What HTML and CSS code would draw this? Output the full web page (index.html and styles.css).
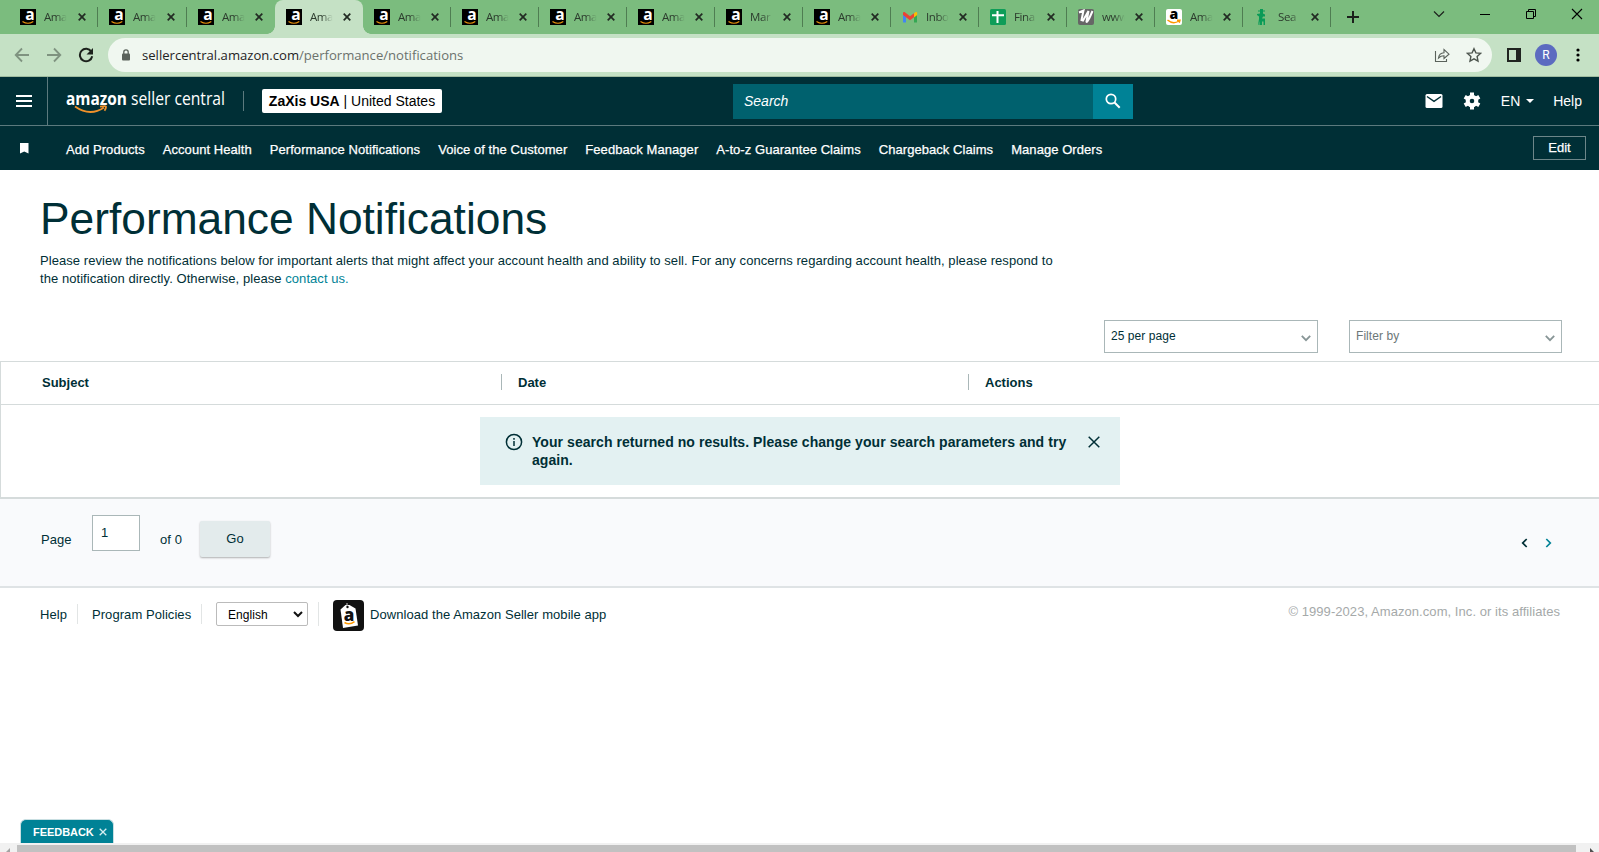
FILE: index.html
```
<!DOCTYPE html>
<html lang="en">
<head>
  <meta charset="utf-8" />
  <title>Performance Notifications</title>
  <link rel="stylesheet" href="styles.css">
</head>
<body>
<svg class="defs" width="0" height="0">
  <symbol id="fav-amazon" viewBox="0 0 16 16">
    <rect width="16" height="16" fill="#000"/>
    <text x="5.300" y="11" font-family="Open Sans, sans-serif" font-weight="700" font-size="16" fill="#fff" textLength="9" lengthAdjust="spacingAndGlyphs">a</text>
    <path d="M2.500 12.500Q8 16 13.300 12.500" fill="none" stroke="#e8920c" stroke-width="1.200"/>
  </symbol>
  <symbol id="fav-amazon-white" viewBox="0 0 16 16">
    <rect width="16" height="16" rx="2" fill="#fff"/>
    <text x="7.600" y="9.500" text-anchor="middle" font-family="Open Sans, sans-serif" font-weight="800" font-size="14" fill="#000">a</text>
    <path d="M1.500 11Q7 15.800 13 12M11 11.200h3l-.8 2.600" fill="none" stroke="#f90" stroke-width="1.400"/>
  </symbol>
  <symbol id="fav-gmail" viewBox="0 0 16 16">
    <path d="M1 4v9.500h3V6z" fill="#4285f4"/>
    <path d="M15 4v9.500h-3V6z" fill="#34a853"/>
    <path d="M12 4.500l1.300-1.200c.9-.6 1.900 0 1.900 1V6L12 8.400z" fill="#fbbc04"/>
    <path d="M1 6V4.300c0-1.200 1-1.700 1.900-1L8 7.200l4-2.900v4L8 11.200 1 6z" fill="#ea4335"/>
  </symbol>
  <symbol id="fav-sheets" viewBox="0 0 16 16">
    <rect width="16" height="16" rx="1.500" fill="#0f9d58"/>
    <path d="M2 6.200h12M7.500 2v12" stroke="#fff" stroke-width="2"/>
  </symbol>
  <symbol id="fav-w" viewBox="0 0 16 16">
    <rect width="16" height="16" rx="2" fill="#666"/>
    <path d="M1 3.500L5.500 1.500 3.500 11 5 11.500 10.500 2 8.500 12.500Q9 15 14.500 2" fill="none" stroke="#fff" stroke-width="2"/>
  </symbol>
  <symbol id="fav-green" viewBox="0 0 16 16">
    <path d="M6 0h3v1.500h2v1H9v2l2 1v2H9l-1 2h3V16H9.500v-3.500H8V16H5.500v-4L4.500 16H4l1-6V7.500L3 6V5l3-.5v-2H4v-1h2z" fill="#0a9b57"/>
  </symbol>
  <symbol id="x" viewBox="0 0 8 8"><path d="M.7.700l6.600 6.600M7.300.700L.700 7.300" fill="none" stroke="#222b23" stroke-width="1.700"/></symbol>
</svg>

<div class="tabs">
  <div class="tab wide"><svg class="fav"><use href="#fav-amazon"/></svg><span>Ama</span><svg class="close"><use href="#x"/></svg></div>
  <div class="tab wide"><svg class="fav"><use href="#fav-amazon"/></svg><span>Ama</span><svg class="close"><use href="#x"/></svg></div>
  <div class="tab nosep"><svg class="fav"><use href="#fav-amazon"/></svg><span>Ama</span><svg class="close"><use href="#x"/></svg></div>
  <div class="tab active"><svg class="fav"><use href="#fav-amazon"/></svg><span>Ama</span><svg class="close"><use href="#x"/></svg></div>
  <div class="tab"><svg class="fav"><use href="#fav-amazon"/></svg><span>Ama</span><svg class="close"><use href="#x"/></svg></div>
  <div class="tab"><svg class="fav"><use href="#fav-amazon"/></svg><span>Ama</span><svg class="close"><use href="#x"/></svg></div>
  <div class="tab"><svg class="fav"><use href="#fav-amazon"/></svg><span>Ama</span><svg class="close"><use href="#x"/></svg></div>
  <div class="tab"><svg class="fav"><use href="#fav-amazon"/></svg><span>Ama</span><svg class="close"><use href="#x"/></svg></div>
  <div class="tab"><svg class="fav"><use href="#fav-amazon"/></svg><span>Mar</span><svg class="close"><use href="#x"/></svg></div>
  <div class="tab"><svg class="fav"><use href="#fav-amazon"/></svg><span>Ama</span><svg class="close"><use href="#x"/></svg></div>
  <div class="tab"><svg class="fav"><use href="#fav-gmail"/></svg><span>Inbo</span><svg class="close"><use href="#x"/></svg></div>
  <div class="tab"><svg class="fav"><use href="#fav-sheets"/></svg><span>Fina</span><svg class="close"><use href="#x"/></svg></div>
  <div class="tab"><svg class="fav"><use href="#fav-w"/></svg><span>www</span><svg class="close"><use href="#x"/></svg></div>
  <div class="tab"><svg class="fav"><use href="#fav-amazon-white"/></svg><span>Ama</span><svg class="close"><use href="#x"/></svg></div>
  <div class="tab"><svg class="fav"><use href="#fav-green"/></svg><span>Sea</span><svg class="close"><use href="#x"/></svg></div>
  <svg class="plus" width="12" height="12"><path d="M6 0v12M0 6h12" stroke="#1c211c" stroke-width="2"/></svg>
  <div class="win">
    <svg width="12" height="12"><path d="M1 3.500l5 5 5-5" fill="none" stroke="#1c211c" stroke-width="1.200"/></svg>
    <svg width="12" height="12"><path d="M1 6.500h10" stroke="#000"/></svg>
    <svg width="12" height="12"><path d="M1.500 3.500h7v7h-7zM3.500 3.500v-2h7v7h-2" fill="none" stroke="#000"/></svg>
    <svg width="12" height="12"><path d="M1 1l10 10M11 1L1 11" stroke="#000" stroke-width="1.100"/></svg>
  </div>
</div>

<div class="toolbar">
  <svg class="nav-btn" width="16" height="16"><path d="M15 8H2M8 1.500L1.700 8 8 14.500" fill="none" stroke="#7f9380" stroke-width="1.800"/></svg>
  <svg class="nav-btn" width="16" height="16"><path d="M1 8h13M8 1.500L14.300 8 8 14.500" fill="none" stroke="#7f9380" stroke-width="1.800"/></svg>
  <svg class="nav-btn" width="16" height="16"><path d="M13.300 4.600A6.200 6.200 0 1 0 14.200 9.200" fill="none" stroke="#1c211c" stroke-width="2"/><path d="M15 1v6.500H8.500z" fill="#1c211c"/></svg>
  <div class="address">
    <svg class="lock" width="10" height="12"><rect x="1" y="4.500" width="8" height="7" rx="1" fill="#5a625b"/><path d="M2.800 5V3a2.200 2.200 0 0 1 4.400 0v2" fill="none" stroke="#5a625b" stroke-width="1.300"/></svg>
    <div class="url">sellercentral.amazon.com<span>/performance/notifications</span></div>
    <svg width="16" height="16"><path d="M1.500 4v10.500h11V12M4.500 11C5 7.500 7 6 10 5.800V2.500l5 4.700-5 4.300V8.800C7.500 8.800 6 9.500 4.500 11z" fill="none" stroke="#5a625b" stroke-width="1.100"/></svg>
    <svg class="star" width="16" height="16"><path d="M8 1.700l1.900 4.200 4.600.5-3.400 3.100.9 4.600-4-2.300-4 2.300.9-4.600L1.500 6.400l4.600-.5z" fill="none" stroke="#4d554e" stroke-width="1.400"/></svg>
  </div>
  <svg class="panel" width="14" height="14"><path d="M1 1h12v12H1z" fill="none" stroke="#202420" stroke-width="2"/><path d="M9 0h5v14H9z" fill="#202420"/></svg>
  <div class="avatar">R</div>
  <svg width="4" height="14"><circle cx="2" cy="2" r="1.600"/><circle cx="2" cy="7" r="1.600"/><circle cx="2" cy="12" r="1.600"/></svg>
</div>

<div class="header">
  <div class="menu"><svg width="16" height="12"><path d="M0 1h16M0 6h16M0 11h16" stroke="#fff" stroke-width="2"/></svg></div>
  <svg class="logo" width="161" height="28">
    <text x="0" y="18" class="logo-a" textLength="61" lengthAdjust="spacingAndGlyphs">amazon</text>
    <text x="65" y="18" class="logo-b" textLength="94" lengthAdjust="spacingAndGlyphs">seller central</text>
    <path d="M9 19.500Q24 30 38 20.500M34 19.700q6.500-1.200 6 .3 0 1.800-1.500 3.800" fill="none" stroke="#f0912a" stroke-width="1.800"/>
  </svg>
  <div class="divider"></div>
  <div class="account"><b>ZaXis USA</b> | United States</div>
  <div class="search">
    <div class="field">Search</div>
    <div class="go"><svg width="16" height="16"><circle cx="6" cy="6" r="4.700" fill="none" stroke="#fff" stroke-width="1.700"/><path d="M9.500 9.500l5.200 5.200" stroke="#fff" stroke-width="2"/></svg></div>
  </div>
  <div class="tools">
    <svg width="18" height="14"><rect x=".5" width="17" height="14" rx="1.500" fill="#fff"/><path d="M2 2.500l7 4.800 7-4.800" fill="none" stroke="#002f36" stroke-width="1.500"/></svg>
    <svg class="gear" width="18" height="18"><circle cx="9" cy="9" r="4.300" fill="none" stroke="#fff" stroke-width="4"/><path d="M9 .6v3M9 14.400v3M1.700 4.800l2.600 1.500M13.700 11.700l2.600 1.500M1.700 13.200l2.600-1.500M13.700 6.300l2.600-1.500" stroke="#fff" stroke-width="4"/></svg>
    <span class="lang">EN <i></i></span>
    <span>Help</span>
  </div>
</div>

<div class="nav">
  <svg class="bookmark" width="9" height="11"><path d="M0 0h8.500v10.500L4.250 8.500 0 10.500z" fill="#fff"/></svg>
  <span>Add Products</span>
  <span>Account Health</span>
  <span>Performance Notifications</span>
  <span>Voice of the Customer</span>
  <span>Feedback Manager</span>
  <span>A-to-z Guarantee Claims</span>
  <span>Chargeback Claims</span>
  <span>Manage Orders</span>
  <button class="edit">Edit</button>
</div>

<div class="content">
  <h1>Performance Notifications</h1>
  <p class="intro">Please review the notifications below for important alerts that might affect your account health and ability to sell. For any concerns regarding account health, please respond to<br>the notification directly. Otherwise, please <a>contact us.</a></p>
  <div class="filters">
    <div class="select">25 per page<svg width="10" height="7"><path d="M.8.800L5 5.200 9.200.800" fill="none" stroke="#879596" stroke-width="1.800"/></svg></div>
    <div class="select grey">Filter by<svg width="10" height="7"><path d="M.8.800L5 5.200 9.200.800" fill="none" stroke="#879596" stroke-width="1.800"/></svg></div>
  </div>
  <div class="table">
    <div class="thead">
      <div class="th subject">Subject</div>
      <div class="th date">Date</div>
      <div class="th actions">Actions</div>
    </div>
    <div class="alert">
      <svg width="18" height="18"><circle cx="9" cy="9" r="7.600" fill="none" stroke="#002f36" stroke-width="1.500"/><path d="M9 8v5M9 5v1.700" stroke="#002f36" stroke-width="1.500"/></svg>
      <div class="message">Your search returned no results. Please change your search parameters and try<br>again.</div>
      <svg class="dismiss" width="12" height="12"><path d="M.7.700l10.600 10.600M11.300.700L.700 11.300" stroke="#002f36" stroke-width="1.500"/></svg>
    </div>
  </div>
  <div class="pager">
    <span class="page">Page</span>
    <div class="number">1</div>
    <span class="of">of 0</span>
    <button class="go-btn">Go</button>
    <div class="arrows">
      <svg width="7" height="10"><path d="M5.700 1L1.700 5l4 4" fill="none" stroke="#002f36" stroke-width="1.700"/></svg>
      <svg width="7" height="10"><path d="M1.300 1l4 4-4 4" fill="none" stroke="#008296" stroke-width="1.700"/></svg>
    </div>
  </div>
  <div class="footer">
    <span class="f-help">Help</span>
    <span class="f-policy">Program Policies</span>
    <div class="f-lang"><div class="lang-select">English<svg width="10" height="7"><path d="M1 1l4 4 4-4" fill="none" stroke="#111" stroke-width="2"/></svg></div></div>
    <svg class="app-icon" width="31" height="31">
      <rect width="31" height="31" rx="4" fill="#111"/>
      <path d="M7.500 9.500l5-4.500h4l6 3.500L25 25.500l-15 2.500z" fill="#fff"/>
      <path d="M14 6.500V3" stroke="#ccc"/>
      <circle cx="14.500" cy="7" r="1.200" fill="#111"/>
      <text x="16" y="20.500" text-anchor="middle" class="app-a">a</text>
      <path d="M11.500 22.500q5 3 10-.8" fill="none" stroke="#f90" stroke-width="1.500"/>
    </svg>
    <span class="app">Download the Amazon Seller mobile app</span>
    <span class="copy">© 1999-2023, Amazon.com, Inc. or its affiliates</span>
  </div>
</div>
<div class="feedback">FEEDBACK<svg width="8" height="8"><path d="M.7.700l6.600 6.600M7.300.700L.700 7.300" stroke="#d5eef1" stroke-width="1.300"/></svg></div>
<div class="scrollbar">
  <svg width="17" height="9"><path d="M10 5v4H6z" fill="#a3a3a3"/></svg>
  <div class="thumb"></div>
  <svg width="23" height="9"><path d="M14 5v4h4z" fill="#505050"/></svg>
</div>
</body>
</html>
```
FILE: styles.css
```
* {
  box-sizing: border-box;
}

body {
  margin: 0;
  height: 852px;
  overflow: hidden;
  display: flex;
  flex-direction: column;
  background: #fff;
  color: #002f36;
  font-family: "Liberation Sans", Arial, sans-serif;
  font-size: 13px;
  position: relative;
}

svg {
  display: block;
  flex: none;
}

.defs {
  position: absolute;
}

span, .url, .account, .message {
  white-space: nowrap;
}

/* browser tabs */
.tabs {
  height: 34px;
  flex: none;
  display: flex;
  padding-left: 9px;
  background: #7bbc7e;
}

.tab {
  width: 88px;
  height: 34px;
  flex: none;
  display: flex;
  align-items: center;
  padding-left: 11px;
  background: linear-gradient(#4f7d52, #4f7d52) right 7px / 1px 20px no-repeat;
  font-family: "Open Sans", sans-serif;
  font-size: 11.5px;
  letter-spacing: -0.4px;
  color: #2c3b2d;
}

.tab.wide {
  width: 89px;
}

.tab.nosep {
  background: none;
}

.tab.active {
  background: #c5e1c5;
  border-radius: 8px 8px 0 0;
  position: relative;
}

.tab.active::before, .tab.active::after {
  content: "";
  position: absolute;
  bottom: 0;
  left: -8px;
  width: 8px;
  height: 8px;
  background: radial-gradient(circle at 0 0, transparent 7.5px, #c5e1c5 8px);
}

.tab.active::after {
  left: auto;
  right: -8px;
  background: radial-gradient(circle at 100% 0, transparent 7.5px, #c5e1c5 8px);
}

.tab .fav {
  width: 16px;
  height: 16px;
}

.tab span {
  width: 24px;
  margin: 0 9px 1px 8px;
  -webkit-mask-image: linear-gradient(90deg, #000 50%, transparent 95%);
  mask-image: linear-gradient(90deg, #000 50%, transparent 95%);
}

.tab .close {
  width: 8px;
  height: 8px;
}

.tab.wide span {
  margin-right: 10px;
}

.plus {
  margin: 11px 0 0 16px;
}

.win {
  margin-left: auto;
  margin-right: 16px;
  padding-top: 8px;
  display: flex;
  gap: 34px;
}

/* browser toolbar */
.toolbar {
  height: 43px;
  flex: none;
  display: flex;
  align-items: center;
  padding: 0 19px 1px 14px;
  background: #c5e1c5;
  border-bottom: 1px solid #9fbb9f;
}

.nav-btn {
  margin-right: 16px;
}

.address {
  width: 1384px;
  height: 34px;
  margin-left: -2px;
  flex: none;
  display: flex;
  align-items: center;
  padding: 0 10px 0 13px;
  border-radius: 17px;
  background: #f0f7f0;
}

.url {
  flex: 1;
  margin-left: 11px;
  font-family: "Open Sans", sans-serif;
  font-size: 13.1px;
  color: #1f231f;
}

.url span {
  color: #6b726c;
}

.star {
  margin-left: 16px;
}

.panel {
  margin-left: 15px;
}

.avatar {
  width: 22px;
  height: 22px;
  margin: 0 19px 0 14px;
  border-radius: 50%;
  background: #5c6bc0;
  color: #fff;
  font: 12px/22px Roboto, sans-serif;
  text-align: center;
}

/* seller central header */
.header {
  height: 49px;
  flex: none;
  display: flex;
  align-items: center;
  background: #002f36;
  border-bottom: 1px solid #5c7a7e;
  color: #fff;
  font-size: 14px;
}

.menu {
  width: 48px;
  height: 48px;
  display: flex;
  align-items: center;
  justify-content: center;
  border-right: 1px solid #5c7a7e;
}

.logo {
  margin: 0 0 0 18px;
}

.logo text {
  font-family: "Open Sans", sans-serif;
  font-size: 18.5px;
  fill: #fff;
}

.logo .logo-a {
  font-weight: 700;
}

.divider {
  width: 1px;
  height: 20px;
  margin-left: 16px;
  background: #5c7a7e;
}

.account {
  width: 180px;
  height: 24px;
  margin-left: 18px;
  border-radius: 2px;
  background: #fff;
  color: #000;
  line-height: 24px;
  text-align: center;
}

.search {
  width: 400px;
  height: 35px;
  margin-left: 291px;
  display: flex;
}

.field {
  flex: 1;
  padding-left: 11px;
  background: #00616e;
  font-style: italic;
  line-height: 34px;
}

.go {
  width: 40px;
  display: flex;
  align-items: center;
  justify-content: center;
  background: #008296;
}

.tools {
  margin-left: auto;
  padding-right: 17px;
  display: flex;
  align-items: center;
}

.gear {
  margin: 0 20px 0 20px;
}

.lang {
  margin-right: 19px;
}

.lang i {
  display: inline-block;
  margin: 0 0 3px 2px;
  border: 4px solid transparent;
  border-top-color: #fff;
  border-bottom: 0;
}

.nav {
  height: 44px;
  flex: none;
  display: flex;
  align-items: center;
  gap: 18px;
  padding: 0 13px 0 20px;
  background: #002f36;
  color: #fff;
  letter-spacing: 0.06px;
}

.nav span {
  padding-top: 3px;
  -webkit-text-stroke: 0.25px #fff;
}

.bookmark {
  margin-right: 19px;
}

.edit {
  width: 53px;
  height: 24px;
  margin-left: auto;
  margin-bottom: 1px;
  padding: 0;
  border: 1px solid #6d8689;
  background: none;
  color: #fff;
  font: 13px "Liberation Sans", Arial, sans-serif;
  -webkit-text-stroke: 0.25px #fff;
}

/* page */
.content {
  flex: 1;
  min-height: 0;
  letter-spacing: 0.06px;
}

h1 {
  margin: 0;
  padding: 24px 0 0 40px;
  font-size: 44.3px;
  line-height: 50px;
  font-weight: 400;
  letter-spacing: 0;
}

.intro {
  margin: 8px 0 0 40px;
  line-height: 18px;
  white-space: nowrap;
}

.intro a {
  color: #008296;
}

.filters {
  display: flex;
  justify-content: flex-end;
  gap: 31px;
  padding: 32px 37px 8px 0;
}

.select {
  width: 214px;
  height: 33px;
  display: flex;
  align-items: center;
  justify-content: space-between;
  padding: 0 6px 2px 6px;
  border: 1px solid #aab7b8;
  font-size: 12px;
}

.select svg {
  margin-top: 5px;
}

.select.grey {
  width: 213px;
  color: #6c7778;
}

.table {
  height: 138px;
  border: 1px solid #d5dbdb;
  border-right: 0;
  border-bottom: 2px solid #d5dbdb;
}

.thead {
  height: 43px;
  display: flex;
  align-items: center;
  padding-bottom: 2px;
  border-bottom: 1px solid #d5dbdb;
  font-weight: 700;
  letter-spacing: 0;
}

.th {
  height: 16px;
  line-height: 17px;
}

.subject {
  width: 500px;
  padding-left: 41px;
}

.date {
  width: 467px;
}

.date, .actions {
  padding-left: 16px;
  border-left: 1px solid #aab7b8;
}

.alert {
  width: 640px;
  height: 68px;
  margin: 12px 0 0 479px;
  display: flex;
  padding: 16px 20px 0 25px;
  background: #e3f1f2;
}

.message {
  flex: 1;
  margin-left: 9px;
  font-size: 14px;
  font-weight: 700;
  line-height: 18px;
}

.dismiss {
  margin-top: 3px;
}

.pager {
  height: 89px;
  display: flex;
  align-items: flex-start;
  padding: 16px 47px 0 41px;
  background: #f9fafc;
  border-bottom: 2px solid #dfe3e5;
}

.page, .of {
  padding-top: 17px;
}

.page {
  width: 51px;
}

.number {
  width: 48px;
  height: 36px;
  padding-left: 8px;
  border: 1px solid #aab7b8;
  background: #fff;
  line-height: 34px;
}

.of {
  width: 60px;
  padding-left: 20px;
}

.go-btn {
  width: 70px;
  height: 36px;
  margin-top: 6px;
  padding: 0 0 2px;
  border: 0;
  border-radius: 2px;
  background: #e3ebec;
  box-shadow: 0 1px 2px rgba(0, 0, 0, 0.3);
  color: #002f36;
  font: 13px "Liberation Sans", Arial, sans-serif;
}

.arrows {
  margin: 23px 0 0 auto;
  display: flex;
  gap: 17px;
}

.footer {
  height: 52px;
  display: flex;
  align-items: center;
  padding: 0 39px 0 40px;
}

.f-help, .f-policy {
  height: 20px;
  line-height: 22px;
  border-right: 1px solid #e2e5e5;
}

.f-help {
  width: 38px;
}

.f-policy {
  width: 124px;
  padding-left: 14px;
}

.f-lang {
  width: 117px;
  padding-left: 14px;
  border-right: 1px solid #e2e5e5;
}

.lang-select {
  width: 92px;
  height: 24px;
  display: flex;
  align-items: center;
  justify-content: space-between;
  padding: 1px 4px 0 11px;
  border: 1px solid #bbb;
  border-radius: 2px;
  color: #000;
  font-size: 12px;
}

.app-icon {
  margin: 3px 6px 0 14px;
}

.app-a {
  font: 800 17px "Open Sans", sans-serif;
  fill: #111;
}

.copy {
  margin-left: auto;
  margin-bottom: 6px;
  color: #a5a9a9;
}

/* sits over the page, above the scrollbar */
.feedback {
  position: absolute;
  left: 20px;
  bottom: 9px;
  width: 94px;
  height: 24px;
  display: flex;
  align-items: center;
  gap: 5px;
  padding-left: 12px;
  border: 1px solid #c9dfe2;
  border-bottom: 0;
  border-radius: 6px 6px 0 0;
  background: #008296;
  color: #fff;
  font-size: 11px;
  font-weight: 700;
  letter-spacing: -0.05px;
}

.scrollbar {
  height: 9px;
  flex: none;
  display: flex;
  background: #f1f1f1;
}

.thumb {
  flex: 1;
  margin-top: 2px;
  background: #c1c1c1;
}
```
